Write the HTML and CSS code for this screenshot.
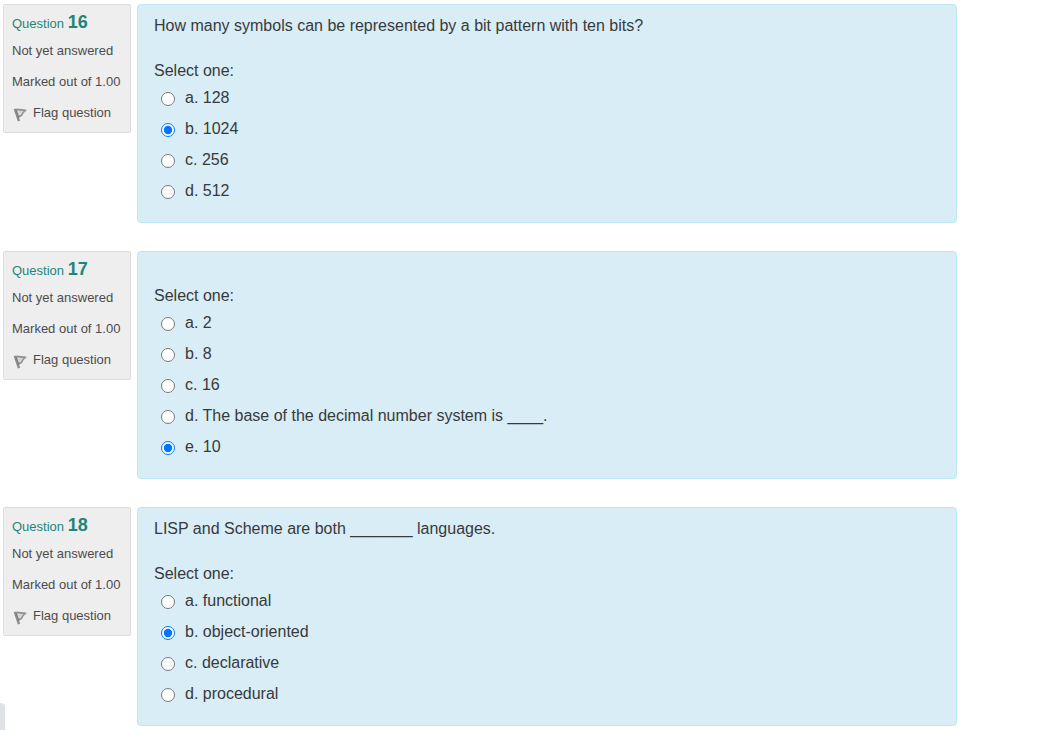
FILE: index.html
```html
<!DOCTYPE html>
<html lang="en">
<head>
<meta charset="utf-8">
<title>Quiz</title>
<link rel="stylesheet" href="styles.css">
</head>
<body>
<svg class="sprite" aria-hidden="true">
  <symbol id="flag" viewBox="0 0 14 15">
    <path d="M1.8 1.8 6 14.2" fill="none" stroke="#8c8c8c" stroke-width="2.4"/>
    <path d="M3.4 2.4 12.6 3.4Q9.4 5.2 8.6 8.4L5.8 9.4" fill="#d6d6d6" stroke="#8f8f8f" stroke-width="1.6" stroke-linejoin="round"/>
    <path d="M3 2.4 6 11" fill="none" stroke="#777" stroke-width="1"/>
  </symbol>
</svg>
<main class="quiz">
  <section class="question">
    <div class="info">
      <h3 class="number">Question <span class="qno">16</span></h3>
      <div class="state">Not yet answered</div>
      <div class="grade">Marked out of 1.00</div>
      <button class="flag" type="button"><svg class="flag-icon"><use href="#flag"/></svg>Flag question</button>
    </div>
    <div class="content">
      <p class="text">How many symbols can be represented by a bit pattern with ten bits?</p>
      <fieldset class="answers">
        <legend class="prompt">Select one:</legend>
        <label class="option"><input type="radio" name="q16"><span>a. 128</span></label>
        <label class="option"><input type="radio" name="q16" checked><span>b. 1024</span></label>
        <label class="option"><input type="radio" name="q16"><span>c. 256</span></label>
        <label class="option"><input type="radio" name="q16"><span>d. 512</span></label>
      </fieldset>
    </div>
  </section>
  <section class="question">
    <div class="info">
      <h3 class="number">Question <span class="qno">17</span></h3>
      <div class="state">Not yet answered</div>
      <div class="grade">Marked out of 1.00</div>
      <button class="flag" type="button"><svg class="flag-icon"><use href="#flag"/></svg>Flag question</button>
    </div>
    <div class="content">
      <p class="text"></p>
      <fieldset class="answers">
        <legend class="prompt">Select one:</legend>
        <label class="option"><input type="radio" name="q17"><span>a. 2</span></label>
        <label class="option"><input type="radio" name="q17"><span>b. 8</span></label>
        <label class="option"><input type="radio" name="q17"><span>c. 16</span></label>
        <label class="option"><input type="radio" name="q17"><span>d. The base of the decimal number system is ____.</span></label>
        <label class="option"><input type="radio" name="q17" checked><span>e. 10</span></label>
      </fieldset>
    </div>
  </section>
  <section class="question">
    <div class="info">
      <h3 class="number">Question <span class="qno">18</span></h3>
      <div class="state">Not yet answered</div>
      <div class="grade">Marked out of 1.00</div>
      <button class="flag" type="button"><svg class="flag-icon"><use href="#flag"/></svg>Flag question</button>
    </div>
    <div class="content">
      <p class="text">LISP and Scheme are both _______ languages.</p>
      <fieldset class="answers">
        <legend class="prompt">Select one:</legend>
        <label class="option"><input type="radio" name="q18"><span>a. functional</span></label>
        <label class="option"><input type="radio" name="q18" checked><span>b. object-oriented</span></label>
        <label class="option"><input type="radio" name="q18"><span>c. declarative</span></label>
        <label class="option"><input type="radio" name="q18"><span>d. procedural</span></label>
      </fieldset>
    </div>
  </section>
</main>
<div class="drawer-edge"></div>
</body>
</html>
```
FILE: styles.css
```css
* {
  box-sizing: border-box;
}

body {
  margin: 0;
  background: #fff;
  color: #373a3c;
  font: 16px/22px "Liberation Sans", Arial, sans-serif;
}

.sprite {
  display: none;
}

.quiz {
  display: flex;
  flex-direction: column;
  gap: 28px;
  padding: 4px 94px 4px 3px;
}

.question {
  display: flex;
  align-items: flex-start;
  gap: 6px;
}

.info {
  flex: 0 0 128px;
  padding: 6px 8px 4px;
  border: 1px solid #dcdcdc;
  border-radius: 2px;
  background: #eee;
  color: #4c4c4c;
  font-size: 13px;
  line-height: 31px;
  white-space: nowrap;
}

.number {
  margin: 0;
  color: #1d8579;
  font-size: 13px;
  font-weight: 400;
  line-height: 22px;
}

.qno {
  font-size: 18px;
  font-weight: 700;
}

.flag {
  display: flex;
  align-items: center;
  gap: 6px;
  padding: 0 0 0 1px;
  border: 0;
  background: none;
  color: inherit;
  font: inherit;
}

.flag-icon {
  width: 14px;
  height: 15px;
  margin-top: 3px;
}

.content {
  flex: 1;
  min-width: 0;
  padding: 10px 16px 16px;
  border: 1px solid #bce8f1;
  border-radius: 4px;
  background: #d9edf6;
}

.text {
  margin: 0 0 22px;
}

.answers {
  min-width: 0;
  margin: 0;
  padding: 0;
  border: 0;
}

.prompt {
  padding: 0;
  line-height: 23px;
}

.option {
  display: flex;
  align-items: center;
  gap: 10px;
  padding-left: 7px;
  line-height: 31px;
}

.option input {
  flex: none;
  width: 14px;
  height: 14px;
  margin: 3px 0 0;
  accent-color: #0075ff;
}

.drawer-edge {
  position: fixed;
  left: 0;
  bottom: 0;
  width: 5px;
  height: 27px;
  border-top-right-radius: 4px;
  background: #dee2e6;
}
```
